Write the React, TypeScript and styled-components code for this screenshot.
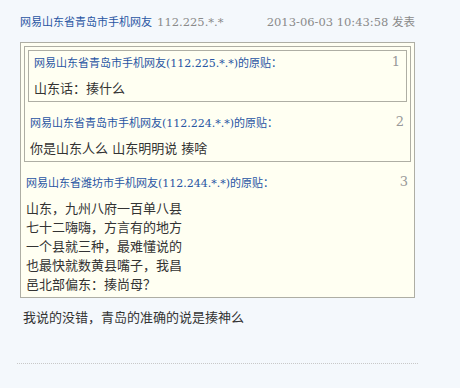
import styled, { createGlobalStyle } from "styled-components";

const GlobalStyle = createGlobalStyle`
    html, body {
        margin: 0;
        padding: 0;
        background: #f4f8fc;
    }
    body {
        font-family: "DejaVu Serif", "Noto Sans CJK SC", serif;
        color: #333;
    }
`;

type FloorData = {
    author: string,
    ip: string,
    lines: string[]
}

// innermost first
const floors: FloorData[] = [
    {author: "网易山东省青岛市手机网友", ip: "112.225.*.*", lines: ["山东话：揍什么"]},
    {author: "网易山东省青岛市手机网友", ip: "112.224.*.*", lines: ["你是山东人么 山东明明说 揍啥"]},
    {
        author: "网易山东省潍坊市手机网友",
        ip: "112.244.*.*",
        lines: [
            "山东，九州八府一百单八县",
            "七十二嗨嗨，方言有的地方",
            "一个县就三种，最难懂说的",
            "也最快就数黄县嘴子，我昌",
            "邑北部偏东：揍尚母？"
        ]
    }
];

const Floor = ({ level }: { level: number }) => {
    const f = floors[level];
    return (
        <FloorBox>
            {level > 0 && <Floor level={level - 1} />}
            <FloorHead>
                <Author>{f.author}({f.ip})的原贴：</Author>
                <FloorNum>{level + 1}</FloorNum>
            </FloorHead>
            <FloorText>
                {f.lines.map((l, i) => (
                    <span key={i}>{l}{i < f.lines.length - 1 && <br />}</span>
                ))}
            </FloorText>
        </FloorBox>
    );
};

const App = () => {
    return (
        <>
            <GlobalStyle />
            <Reply>
                <ReplyHead>
                    <div>
                        <Author>网易山东省青岛市手机网友</Author> <Gray>112.225.*.*</Gray>
                    </div>
                    <Gray>2013-06-03 10:43:58 发表</Gray>
                </ReplyHead>
                <Floor level={2} />
                <ReplyText>我说的没错，青岛的准确的说是揍神么</ReplyText>
            </Reply>
        </>
    );
};

const Reply = styled.div`
    width: 395px;
    margin-left: 17px;
    padding: 14px 3px 0 3px;
    height: 349px;
    border-bottom: 1px dotted #c8c8c8;
`;

const ReplyHead = styled.div`
    display: flex;
    justify-content: space-between;
    align-items: center;
    height: 16px;
    line-height: 16px;
    margin-bottom: 12px;
`;

const Author = styled.span`
    color: #2855a3;
    font-size: 11px;
`;

const Gray = styled.span`
    color: #8a8a8a;
    font-size: 11.5px;
`;

const FloorBox = styled.div`
    border: 1px solid #aeaea4;
    background: #fffff2;
    padding: 3px;
    & > & {
        margin-bottom: 12px;
    }
`;

const FloorHead = styled.div`
    display: flex;
    justify-content: space-between;
    align-items: center;
    height: 16px;
    line-height: 16px;
    padding: 2px 3px 0 2px;
`;

const FloorNum = styled.span`
    color: #999;
    font-size: 13px;
    margin-top: -4px;
`;

const FloorText = styled.p`
    margin: 7px 0 0 0;
    padding-left: 2px;
    font-size: 13px;
    line-height: 19px;
    color: #333;
`;

const ReplyText = styled.p`
    margin: 10px 0 0 0;
    padding-left: 3px;
    font-size: 13px;
    line-height: 19px;
    color: #333;
`;

export default App;
